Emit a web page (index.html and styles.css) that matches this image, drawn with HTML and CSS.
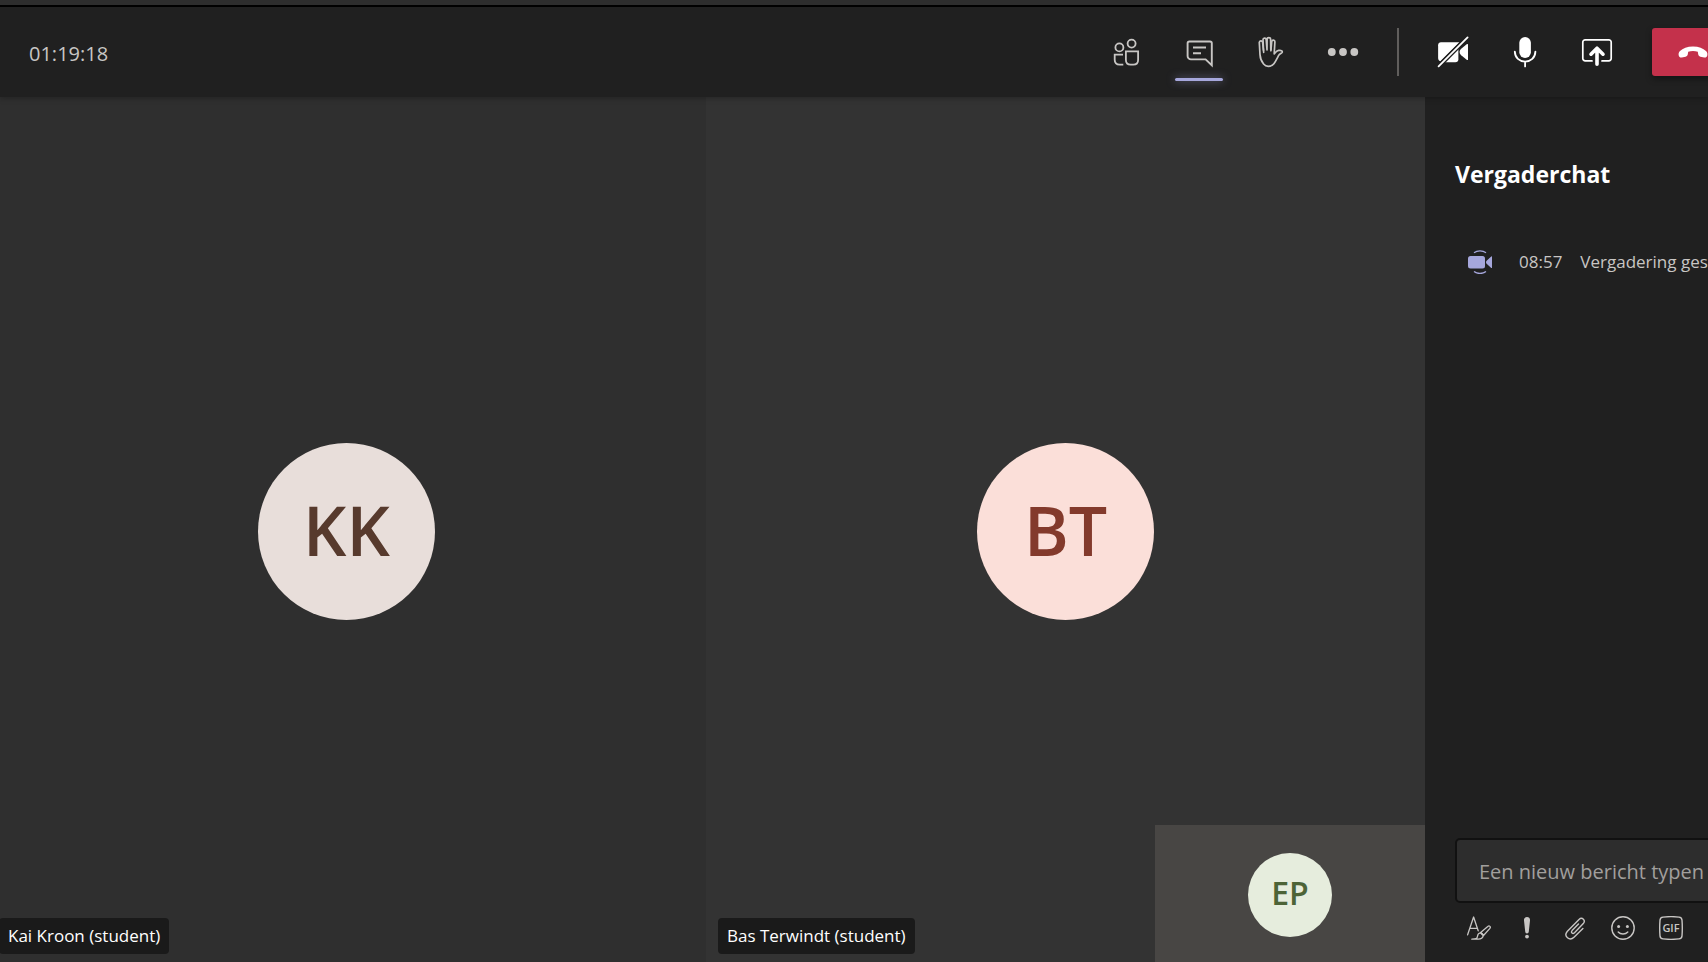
FILE: index.html
```html
<!DOCTYPE html>
<html lang="nl">
<head>
<meta charset="utf-8">
<meta name="viewport" content="width=device-width, initial-scale=1">
<title>Vergadering</title>
<link rel="stylesheet" href="styles.css">
</head>
<body>
<div class="meeting">
  <header class="topbar">
    <time class="timer">01:19:18</time>
    <nav class="controls" aria-label="Vergaderopties">
      <button class="control" type="button" aria-label="Deelnemers">
        <svg class="icon" viewBox="0 0 32 32" fill="none" stroke="currentColor" stroke-width="1.8">
          <circle cx="8.4" cy="11.4" r="4"/><circle cx="20.600" cy="7.600" r="4"/>
          <path d="M12 18.600H3.700v5.200c0 3 1.900 4.900 5 4.900h3.600"/>
          <path d="M14.900 15.400h12.200V24c0 3-1.900 4.700-4.800 4.700h-2.600c-2.900 0-4.800-1.700-4.800-4.700z"/>
        </svg>
      </button>
      <button class="control control-active" type="button" aria-label="Chat" aria-pressed="true">
        <svg class="icon" viewBox="0 0 32 32" fill="none" stroke="currentColor" stroke-width="1.900">
          <path d="M6.400 5.500H27a1.800 1.800 0 0 1 1.800 1.800v22l-6.200-5.900H8a3.400 3.400 0 0 1-3.400-3.400V7.300a1.800 1.800 0 0 1 1.800-1.800z"/>
          <path d="M10 11.500h13M10 17.300h8"/>
        </svg>
      </button>
      <button class="control" type="button" aria-label="Hand opsteken">
        <svg class="icon" viewBox="0 0 32 32" fill="none" stroke="currentColor" stroke-width="1.700" stroke-linejoin="round" stroke-linecap="round">
          <path d="M8.700 16.300 7.600 6.100a1.700 1.700 0 0 0-3.300.3l.7 12.200c.2 3.800 1.600 7 3.600 9.400 1.300 1.600 2.700 2.300 4.700 2.300 2.500 0 4.200-.7 5.600-2.600 1.900-2.700 3.200-5.400 4.600-8 .8-1.400 2-2 3.200-2.800.8-.6.8-1.300.1-2-1.700-1.100-4.600-.5-5.900 1.100l-1.700 1.800.7-12c0-2.100-3-2.300-3.200-.2l-.8 9.200"/>
          <path d="M8.500 14.200 8 3.800c0-2.100 3-2.300 3.200-.2l.8 10.200M12 13.800l.1-10.600c.1-2.200 3.400-2.200 3.500 0l.2 10.600"/>
        </svg>
      </button>
      <button class="control" type="button" aria-label="Meer acties">
        <svg class="icon" viewBox="0 0 32 32" fill="currentColor"><circle cx="4.800" cy="16" r="3.900"/><circle cx="16" cy="16" r="3.900"/><circle cx="27.300" cy="16" r="3.900"/></svg>
      </button>
      <span class="divider"></span>
      <button class="control control-device" type="button" aria-label="Camera inschakelen">
        <svg class="icon" viewBox="0 0 32 32" fill="currentColor">
          <path d="M4 6.300h18.300L3.300 25.300C1.800 24.700 1.100 23.600 1.100 21.800V9.200C1.100 7.300 2.200 6.300 4 6.300z"/>
          <path d="M21.400 11.200v12c0 1.900-1.200 3-3 3H6.400z"/>
          <path d="M22.600 16c0-1.500.6-2.300 1.600-3.200l5.800-4.700c.6-.4 1-.2 1 .5v14.800c0 .7-.4.900-1 .5l-5.800-4.700c-1-.9-1.600-1.700-1.600-3.200z"/>
          <path d="M1.600 30.400 30.600 1.400" fill="none" stroke="#202020" stroke-width="4.400"/>
          <path d="M1.600 30.400 30.600 1.400" fill="none" stroke="currentColor" stroke-width="1.800" stroke-linecap="round"/>
        </svg>
      </button>
      <button class="control control-device" type="button" aria-label="Microfoon dempen">
        <svg class="icon" viewBox="0 0 32 32" fill="currentColor">
          <rect x="10.300" y="1" width="11.600" height="21" rx="5.800"/>
          <path d="M5.800 15.600c.2 6.200 4.600 10 10.300 10s10.100-3.800 10.300-10M16.100 25.600v4.800" fill="none" stroke="currentColor" stroke-width="1.800" stroke-linecap="round"/>
        </svg>
      </button>
      <button class="control control-device" type="button" aria-label="Inhoud delen">
        <svg class="icon" viewBox="0 0 32 32" fill="none" stroke="currentColor">
          <path d="M11 24.900H4.200a2.400 2.400 0 0 1-2.400-2.400V6.200a2.400 2.400 0 0 1 2.400-2.400h23.600a2.400 2.400 0 0 1 2.400 2.400v16.300a2.400 2.400 0 0 1-2.400 2.400H21" stroke-width="1.700" stroke-linecap="round"/>
          <path d="M16 28.200V12.600M10 18.200l6-6 6 6" stroke-width="3.600" stroke-linecap="round" stroke-linejoin="round"/>
        </svg>
      </button>
      <button class="hangup" type="button" aria-label="Verlaten">
        <svg class="icon" viewBox="0 0 32 32" fill="currentColor"><path d="M16 10.400c-5.800 0-10.200 1.800-13 4.600-1.400 1.400-1.700 3-1.200 4.800.4 1.500 1.500 2 3 1.700l3.800-.8c1.400-.3 2-1.200 2.200-2.400l.4-2.600c1.500-.5 3.100-.7 4.800-.7s3.300.2 4.800.7l.4 2.600c.2 1.200.8 2.100 2.200 2.400l3.800.8c1.500.3 2.600-.2 3-1.700.5-1.800.2-3.400-1.200-4.800-2.800-2.800-7.200-4.600-13-4.600z"/></svg>
      </button>
    </nav>
  </header>
  <div class="content">
    <main class="stage">
      <section class="tile">
        <span class="avatar avatar-brown">KK</span>
        <span class="name">Kai Kroon (student)</span>
      </section>
      <section class="tile tile-light">
        <span class="avatar avatar-red">BT</span>
        <span class="name">Bas Terwindt (student)</span>
        <div class="selfview"><span class="avatar avatar-small">EP</span></div>
      </section>
    </main>
    <aside class="chat">
      <h1 class="chat-title">Vergaderchat</h1>
      <div class="event">
        <svg class="event-icon" viewBox="0 0 24 24" fill="currentColor">
          <rect x="0" y="6" width="17" height="12.400" rx="2.500"/>
          <path d="M18 12.200c0-.8.300-1.300.9-1.800l4.300-3.900c.5-.4.800-.2.800.4v10.600c0 .6-.3.800-.8.400L18.900 14c-.6-.5-.9-1-.9-1.800z"/>
          <path d="M6 2.700c3.300-2.500 8.700-2.500 12 0M6 21.600c3.300 2.500 8.700 2.500 12 0" fill="none" stroke="currentColor" stroke-width="1.300"/>
        </svg>
        <time class="event-time">08:57</time>
        <span>Vergadering ges</span>
      </div>
      <form class="composer">
        <input class="message" type="text" aria-label="Nieuw bericht" placeholder="Een nieuw bericht typen">
        <div class="tools">
          <button class="tool" type="button" aria-label="Opmaak">
            <svg class="tool-icon" viewBox="0 0 24 24" fill="none" stroke="currentColor" stroke-width="1.300" stroke-linecap="round" stroke-linejoin="round">
              <path d="M.6 18.800 6.600 1l4.600 13.800M2.800 12.400h7.600"/>
              <path d="m13.300 16.800 7.500-6.400c1.600-1.200 3.300.4 2.100 2l-6.600 7.300zM13.300 16.800c1.600.2 2.800 1.400 3 2.900-.6 2.700-2.700 3.600-5.400 3.500H4.800c3.900 0 5.400-.3 5.700-3 .2-2 1.200-3.200 2.800-3.400z"/>
            </svg>
          </button>
          <button class="tool" type="button" aria-label="Urgentie">
            <svg class="tool-icon" viewBox="0 0 24 24" fill="currentColor"><path d="M12 1.100c2 0 3.200 1.400 3 3.400l-1.200 11c-.1 1.200-.8 1.900-1.800 1.900s-1.700-.7-1.800-1.900L9 4.500c-.2-2 1-3.400 3-3.400z"/><circle cx="12" cy="20.600" r="1.900"/></svg>
          </button>
          <button class="tool" type="button" aria-label="Bijvoegen">
            <svg class="tool-icon" viewBox="0 0 24 24" fill="none" stroke="currentColor" stroke-width="1.400" stroke-linecap="round"><path d="M19.900 12.600 11 21.300c-4.400 4.200-10.700-1-6.800-5.800L16 3.400c3.200-2.900 7 1 4.300 4.200L11.500 16.800c-1.900 1.700-4-.4-2.400-2.200l6.400-6.600"/></svg>
          </button>
          <button class="tool" type="button" aria-label="Emoji">
            <svg class="tool-icon" viewBox="0 0 24 24"><circle cx="12" cy="12" r="11.200" fill="none" stroke="currentColor" stroke-width="1.400"/><circle cx="7.600" cy="10.400" r="1.500" fill="currentColor"/><circle cx="16.400" cy="10.400" r="1.500" fill="currentColor"/><path d="M7.200 16c2.400 2.700 7.200 2.700 9.600 0" fill="none" stroke="currentColor" stroke-width="1.400" stroke-linecap="round"/></svg>
          </button>
          <button class="tool" type="button" aria-label="GIF">
            <svg class="tool-icon" viewBox="0 0 24 24"><path d="M4 1.100c5.300-.6 10.700-.6 16 0 1.800.2 2.900 1.300 3 3 .4 5.300.4 10.500 0 15.800-.1 1.700-1.200 2.800-3 3-5.300.6-10.700.6-16 0-1.800-.2-2.900-1.300-3-3-.4-5.300-.4-10.500 0-15.800.1-1.700 1.200-2.800 3-3z" fill="none" stroke="currentColor" stroke-width="1.400"/><text class="gif" x="12" y="16" text-anchor="middle">GIF</text></svg>
          </button>
        </div>
      </form>
    </aside>
  </div>
</div>
</body>
</html>
```
FILE: styles.css
```css
* { box-sizing: border-box; }

body {
  margin: 0;
  background: #202020;
  font-family: "Open Sans", "Noto Sans", sans-serif;
  color: #c8c6c4;
}

button {
  padding: 0;
  border: 0;
  background: none;
  color: inherit;
  font: inherit;
}

.meeting {
  display: flex;
  flex-direction: column;
  height: 100vh;
  overflow: hidden;
  border-top: 5px solid #2d2d2d;
}

.topbar {
  display: flex;
  flex: none;
  align-items: center;
  justify-content: space-between;
  height: 92px;
  padding-left: 29px;
  border-top: 2px solid #000;
  background: #202020;
  box-shadow: 0 1px 6px rgba(0, 0, 0, 0.3);
  z-index: 1;
}

.timer {
  padding-top: 2px;
  font-size: 20px;
}

.controls {
  display: flex;
  align-items: center;
}

.control {
  display: grid;
  place-items: center;
  position: relative;
  width: 72px;
  height: 72px;
}

.control-device { color: #fff; }

.control-active::after {
  content: "";
  position: absolute;
  bottom: 7px;
  left: 12px;
  right: 12px;
  height: 3px;
  border-radius: 2px;
  background: #a6a7dc;
  box-shadow: 0 0 8px rgba(166, 167, 220, 0.6);
}

.icon {
  display: block;
  width: 32px;
  height: 32px;
}

.divider {
  width: 2px;
  height: 48px;
  margin: 0 18px;
  background: #605e5c;
}

.hangup {
  display: grid;
  place-items: center;
  width: 81px;
  height: 48px;
  margin: 0 -25px 0 19px;
  border-radius: 3px;
  background: #c4314b;
  color: #fff;
  box-shadow: 0 3px 6px rgba(0, 0, 0, 0.4);
}

.content {
  display: grid;
  flex: 1;
  grid-template-columns: minmax(0, 1fr) 283px;
  min-height: 0;
}

/* The stage bleeds past the left and bottom window edges. */
.stage {
  display: grid;
  grid-template-columns: 1fr 1fr;
  margin: 0 0 -4px -13px;
}

.tile {
  display: grid;
  place-items: center;
  position: relative;
  background: #2f2f2f;
}

.tile-light { background: #333; }

.avatar {
  display: grid;
  place-items: center;
  width: 177px;
  height: 177px;
  padding-bottom: 3px;
  border-radius: 50%;
  font-size: 68px;
  font-weight: 600;
  line-height: 1;
}

.avatar-brown { background: #e8deda; color: #573a2d; }
.avatar-red { background: #fbdfd9; color: #833a2c; }

.avatar-small {
  width: 84px;
  height: 84px;
  background: #e6eddd;
  color: #4d6437;
  font-size: 32px;
}

.name {
  position: absolute;
  bottom: 12px;
  left: 12px;
  padding: 0 9px;
  border-radius: 4px;
  background: #1a1a1a;
  color: #fff;
  font-size: 17px;
  line-height: 36px;
}

.selfview {
  display: grid;
  place-items: center;
  position: absolute;
  right: 0;
  bottom: 0;
  width: 270px;
  height: 141px;
  padding-bottom: 2px;
  background: #484644;
}

.chat {
  display: flex;
  flex-direction: column;
  min-height: 0;
  padding: 60px 0 10px 30px;
  overflow: hidden;
  background: #202020;
}

.chat-title {
  margin: 0;
  color: #fff;
  font-size: 23px;
  font-weight: 700;
  line-height: 34px;
}

.event {
  display: flex;
  align-items: center;
  margin-top: 58px;
  padding-left: 13px;
  font-size: 17px;
  line-height: 26px;
  white-space: nowrap;
}

.event-icon {
  flex: none;
  width: 24px;
  height: 24px;
  color: #a6a7dc;
}

.event-time { margin: 0 18px 0 27px; }

.composer { margin-top: auto; }

.message {
  display: block;
  width: calc(100% + 30px);
  height: 65px;
  padding: 2px 22px 0;
  border: 2px solid #111;
  border-radius: 5px;
  background: #2d2d2d;
  color: #fff;
  font: inherit;
  font-size: 20px;
}

.message::placeholder { color: #a19f9d; opacity: 1; }

.tools { display: flex; }

.tool {
  display: grid;
  place-items: center;
  width: 48px;
  height: 49px;
}

.tool-icon {
  display: block;
  width: 24px;
  height: 24px;
}

.gif {
  fill: currentColor;
  font-size: 11px;
  font-weight: 600;
}
```
